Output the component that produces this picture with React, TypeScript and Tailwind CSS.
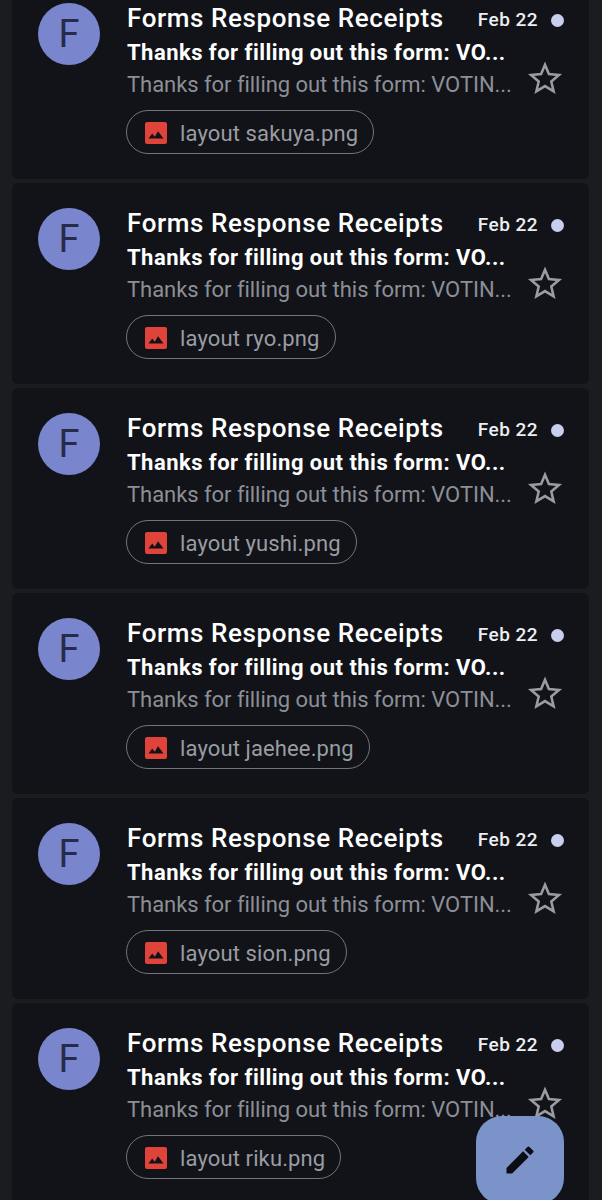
import React from "react";

const names = ["sakuya", "ryo", "yushi", "jaehee", "sion", "riku"];

function Card({ name }: { name: string }) {
  return (
    <div className="h-[201px] rounded-[6px] bg-[#111318] pl-[26px] pr-[25px] pt-[25px] flex gap-[27px]">
      <div className="w-[62px] h-[62px] shrink-0 rounded-full bg-[#7985cc] flex items-center justify-center text-[#262b4a] text-[38px] font-normal leading-none">
        F
      </div>
      <div className="flex-1 min-w-0">
        <div className="flex items-center h-[26px] mt-[2px] mb-[6px]">
          <span className="text-[26px] leading-[26px] font-medium text-white tracking-[0.6px] whitespace-nowrap">Forms Response Receipts</span>
          <span className="ml-auto mt-[4px] text-[19px] leading-[26px] font-medium text-[#eceef3] tracking-[0.45px] whitespace-nowrap">Feb 22</span>
          <span className="ml-[13px] mt-[4px] w-[13px] h-[13px] rounded-full bg-[#c8cfee]" />
        </div>
        <div className="flex">
          <div className="min-w-0 flex-1">
            <div className="text-[22px] leading-[32px] font-bold text-white tracking-[0.47px] whitespace-nowrap">Thanks for filling out this form: VO...</div>
            <div className="text-[22px] leading-[32px] text-[#8d8f97] -tracking-[0.05px] whitespace-nowrap">Thanks for filling out this form: VOTIN...</div>
          </div>
          <svg viewBox="0 0 24 24" className="w-[36px] h-[36px] mt-[23px] mr-[1px] shrink-0" fill="none" stroke="#9a9ca3" strokeWidth="1.7" strokeLinejoin="miter">
            <path d="M12 3.2l2.6 6.2 6.7.55-5.1 4.4 1.55 6.55L12 17.4l-5.75 3.5 1.55-6.55-5.1-4.4 6.7-.55z" />
          </svg>
        </div>
        <div className="mt-[9px] -ml-[1px] inline-flex items-center h-[44px] rounded-full border border-[#72747a] pl-[18px] pr-[15px]">
          <svg viewBox="0 0 22 22" className="w-[22px] h-[22px] mt-[1px] shrink-0">
            <rect width="22" height="22" rx="2" fill="#e0433a" />
            <path d="M3.5 16.5l3.7-5 2.6 3.2 3.2-5.5 5.5 7.3z" fill="#111318" />
          </svg>
          <span className="ml-[13px] pt-[3px] text-[22px] leading-none text-[#9a9ca3] tracking-[0.12px] whitespace-nowrap">layout {name}.png</span>
        </div>
      </div>
    </div>
  );
}

export default function App() {
  return (
    <div className="relative w-[602px] h-[1200px] overflow-hidden bg-[#1b1c20] font-['Roboto',sans-serif]">
      <div className="-mt-[22px] pl-[12px] pr-[13px] flex flex-col gap-[4px]">
        {names.map((n) => (
          <Card key={n} name={n} />
        ))}
      </div>
      <div className="absolute left-[476px] top-[1116px] w-[88px] h-[88px] rounded-[26px] bg-[#7b93c9] flex items-center justify-center">
        <svg viewBox="0 0 24 24" className="w-[36px] h-[36px]" fill="#0b0d14">
          <path d="M3 17.25V21h3.75L17.81 9.94l-3.75-3.75L3 17.25zM20.71 7.04a1 1 0 0 0 0-1.41l-2.34-2.34a1 1 0 0 0-1.41 0l-1.83 1.83 3.75 3.75 1.83-1.83z" />
        </svg>
      </div>
    </div>
  );
}
